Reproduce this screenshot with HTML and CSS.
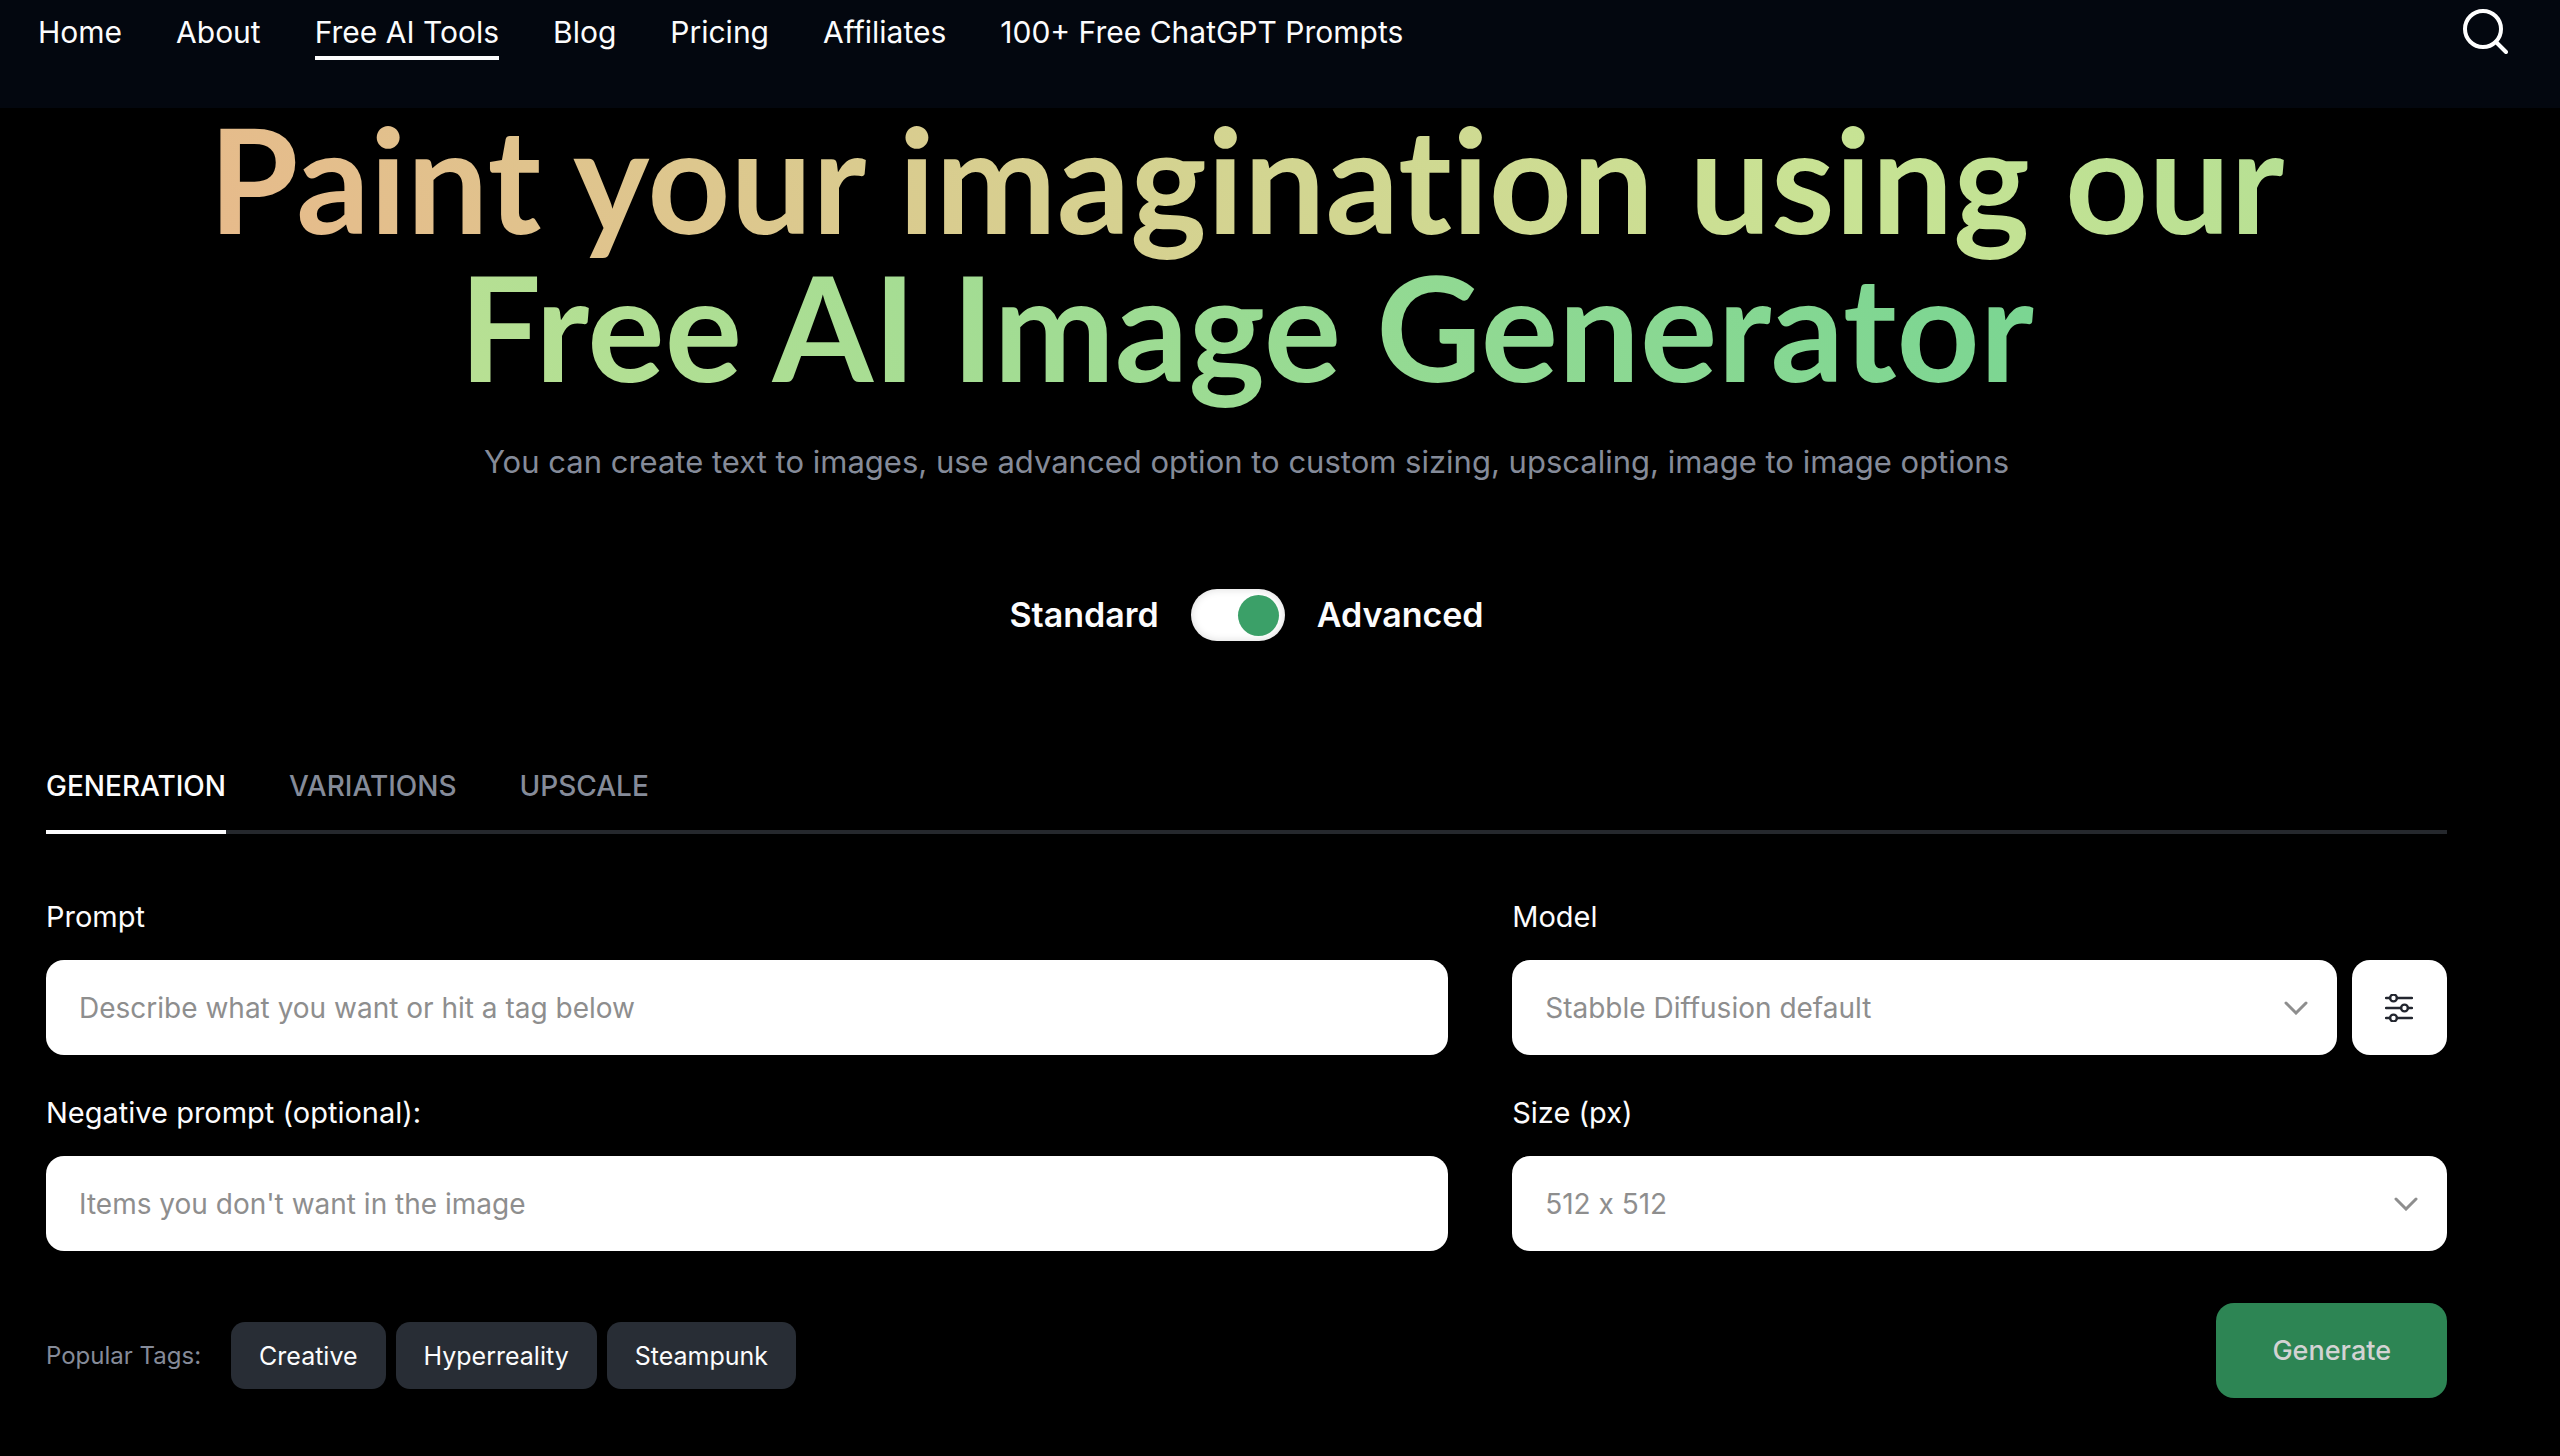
FILE: index.html
```html
<!DOCTYPE html>
<html lang="en">
<head>
    <meta charset="UTF-8">
    <meta name="viewport" content="width=device-width, initial-scale=1.0">
    <title>Free AI Image Generator</title>
    <link rel="stylesheet" href="styles.css">
</head>
<body>
    <header class="header">
        <nav class="nav">
            <a href="#">Home</a>
            <a href="#">About</a>
            <a href="#" class="active">Free AI Tools</a>
            <a href="#">Blog</a>
            <a href="#">Pricing</a>
            <a href="#">Affiliates</a>
            <a href="#">100+ Free ChatGPT Prompts</a>
        </nav>
        <button class="search-btn" aria-label="Search">
            <svg viewBox="0 0 46 46" fill="none" stroke="#fff" stroke-width="4" stroke-linecap="round">
                <circle cx="21" cy="20" r="18"/>
                <path d="M34 33l10 10"/>
            </svg>
        </button>
    </header>

    <main class="container">
        <section class="hero">
            <h1><span>Paint your imagination using our<br>Free AI Image Generator</span></h1>
            <p>You can create text to images, use advanced option to custom sizing, upscaling, image to image options</p>
        </section>

        <div class="mode">
            <label for="mode">Standard</label>
            <input type="checkbox" id="mode" class="switch" checked>
            <label for="mode">Advanced</label>
        </div>

        <div class="tabs">
            <button class="tab active">GENERATION</button>
            <button class="tab">VARIATIONS</button>
            <button class="tab">UPSCALE</button>
        </div>

        <form class="generator">
            <div class="fields">
                <div class="field">
                    <label for="prompt">Prompt</label>
                    <input type="text" id="prompt" placeholder="Describe what you want or hit a tag below">
                </div>
                <div class="field">
                    <label for="model">Model</label>
                    <div class="field-row">
                        <div class="select">
                            <select id="model">
                                <option>Stabble Diffusion default</option>
                            </select>
                            <svg viewBox="0 0 24 14"><path d="M2 2l10 10L22 2"/></svg>
                        </div>
                        <button type="button" class="settings-btn" aria-label="Model settings">
                            <svg viewBox="0 0 28 28" fill="none" stroke="#23262f" stroke-width="2.4" stroke-linecap="round">
                                <path d="M1 4h4M12 4h15M1 14h15M23 14h4M1 24h4M12 24h15"/>
                                <circle cx="8.5" cy="4" r="3.4"/>
                                <circle cx="19.5" cy="14" r="3.4"/>
                                <circle cx="8.5" cy="24" r="3.4"/>
                            </svg>
                        </button>
                    </div>
                </div>
                <div class="field">
                    <label for="negative">Negative prompt (optional):</label>
                    <input type="text" id="negative" placeholder="Items you don't want in the image">
                </div>
                <div class="field">
                    <label for="size">Size (px)</label>
                    <div class="select">
                        <select id="size">
                            <option>512 x 512</option>
                        </select>
                        <svg viewBox="0 0 24 14"><path d="M2 2l10 10L22 2"/></svg>
                    </div>
                </div>
            </div>

            <div class="actions">
                <div class="tags">
                    <span>Popular Tags:</span>
                    <button type="button" class="tag">Creative</button>
                    <button type="button" class="tag">Hyperreality</button>
                    <button type="button" class="tag">Steampunk</button>
                </div>
                <button type="button" class="generate-btn">Generate</button>
            </div>
        </form>
    </main>
</body>
</html>
```

FILE: styles.css
```css
* {
    box-sizing: border-box;
}

body {
    margin: 0;
    background: #000;
    color: #fcfcfd;
    font-family: Inter, "Open Sans", sans-serif;
    font-size: 28px;
}

button, input, select {
    font-family: inherit;
    font-size: inherit;
}

button {
    border: none;
    cursor: pointer;
}

/* header */
.header {
    position: fixed;
    top: 0;
    left: 0;
    right: 0;
    height: 108px;
    padding: 9px 52px 0 38px;
    background: #03070f;
    display: flex;
    justify-content: space-between;
    align-items: flex-start;
}

.nav {
    display: flex;
    gap: 54px;
    font-size: 30px;
}

.nav a {
    color: #fcfcfd;
    text-decoration: none;
    line-height: 46px;
    padding-bottom: 1px;
    border-bottom: 4px solid transparent;
}

.nav a.active {
    border-color: #fcfcfd;
}

.search-btn {
    padding: 0;
    background: none;
}

.search-btn svg {
    display: block;
    width: 46px;
    height: 46px;
}

/* hero */
.container {
    padding: 104px 113px 58px 46px;
}

.hero {
    text-align: center;
}

.hero h1 {
    margin: 0;
    font-family: Lato, sans-serif;
    font-size: 145px;
    font-weight: 700;
    font-variant-ligatures: none;
    line-height: 148px;
}

.hero h1 span {
    background: linear-gradient(60deg, #e7ba8b, #c8e394 45%, #79d592);
    -webkit-background-clip: text;
    background-clip: text;
    color: transparent;
}

.hero p {
    margin: 40px 0 0;
    color: #858b99;
    font-size: 31px;
    line-height: 44px;
}

.mode {
    display: flex;
    justify-content: center;
    align-items: center;
    gap: 32px;
    margin-top: 105px;
    font-size: 34px;
    font-weight: 600;
    line-height: 52px;
}

.switch {
    appearance: none;
    display: flex;
    align-items: center;
    width: 94px;
    height: 52px;
    margin: 0;
    padding: 0 6px;
    border-radius: 26px;
    background: #fff;
    box-shadow: inset 0 0 8px rgba(0, 0, 0, 0.15);
    cursor: pointer;
}

.switch::before {
    content: "";
    width: 41px;
    height: 41px;
    border-radius: 50%;
    background: #3ba068;
}

.switch:checked {
    justify-content: flex-end;
}

/* tabs */
.tabs {
    display: flex;
    gap: 63px;
    margin-top: 123px;
    box-shadow: inset 0 -4px #25282d;
}

.tab {
    padding: 0 0 22px;
    background: none;
    color: #858b99;
    border-bottom: 4px solid transparent;
    font-weight: 500;
    line-height: 44px;
}

.tab.active {
    color: #fcfcfd;
    border-color: #fcfcfd;
}

/* form */
.fields {
    display: grid;
    grid-template-columns: 3fr 2fr;
    gap: 38px 64px;
    margin-top: 63px;
}

.field {
    display: flex;
    flex-direction: column;
    gap: 23px;
}

.field label {
    font-size: 29px;
    line-height: 40px;
}

.field input, .field select {
    width: 100%;
    height: 95px;
    padding: 0 33px;
    border: none;
    border-radius: 18px;
    background: #fff;
    color: #8e8e8e;
    font-feature-settings: "calt" 0;
}

.field input::placeholder {
    color: #8e8e8e;
}

.field-row {
    display: flex;
    gap: 15px;
}

.select {
    position: relative;
    flex: 1;
}

.select select {
    appearance: none;
}

.select svg {
    position: absolute;
    top: 41px;
    right: 29px;
    width: 24px;
    height: 14px;
    fill: none;
    stroke: #8e8e8e;
    stroke-width: 3;
    stroke-linecap: round;
    pointer-events: none;
}

.settings-btn {
    display: flex;
    align-items: center;
    justify-content: center;
    width: 95px;
    height: 95px;
    padding: 0;
    border-radius: 18px;
    background: #fff;
}

.settings-btn svg {
    width: 28px;
    height: 28px;
}

.actions {
    display: flex;
    justify-content: space-between;
    align-items: center;
    margin-top: 52px;
}

.tags {
    display: flex;
    align-items: center;
    gap: 10px;
    padding-top: 10px;
    font-size: 24px;
}

.tags span {
    margin-right: 20px;
    color: #858b99;
}

.tag {
    height: 67px;
    padding: 0 28px;
    border-radius: 14px;
    background: #282d35;
    color: #fcfcfd;
    font-size: 25px;
}

.generate-btn {
    height: 95px;
    padding: 0 56px;
    border-radius: 18px;
    background: #2d8554;
    color: #d3d3d3;
    font-size: 27px;
    font-weight: 500;
}
```
